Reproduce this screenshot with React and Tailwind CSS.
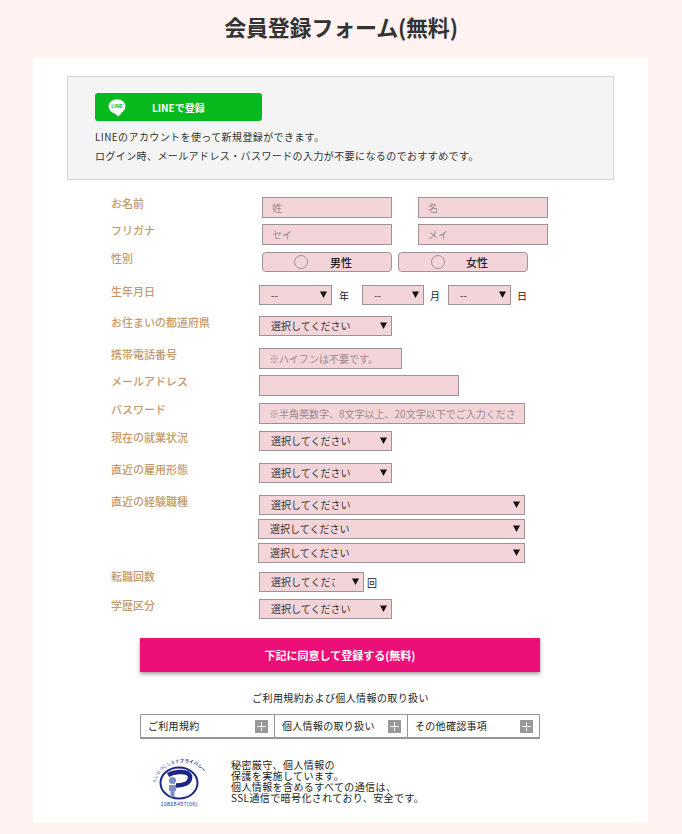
const jp = { fontFamily: '"Noto Sans CJK JP", "Noto Sans", sans-serif' }

function TextInput({ placeholder, className }) {
  return (
    <input
      type="text"
      placeholder={placeholder}
      className={`block h-[21px] border border-[#9b9497] bg-[#f3d5d9] pl-[9px] pr-[9px] text-[10px] text-[#333] outline-none placeholder:text-[#9a8a8e] ${className}`}
    />
  )
}

function Select({ value = '選択してください', className }) {
  return (
    <div className={`relative h-[20px] ${className}`}>
      <select
        defaultValue={value}
        className="block h-full w-full appearance-none rounded-none border border-[#9b9497] bg-[#f3d5d9] pl-[11px] pr-[28px] text-[10px] leading-none text-[#333] outline-none"
      >
        <option>{value}</option>
      </select>
      <svg viewBox="0 0 7 7" className="pointer-events-none absolute right-[5px] top-[6px] h-[7px] w-[7px]">
        <path d="M0 .5h7L3.500 7z" fill="#111" />
      </svg>
    </div>
  )
}

function Radio({ label, className, textClass }) {
  return (
    <div className={`flex h-[20px] w-[130px] items-center rounded-[4px] border border-[#9b9497] bg-[#f3d5d9] text-[11px] font-medium text-[#222] ${className}`}>
      <span className="h-[14px] w-[14px] rounded-full border border-[#9b9497]" />
      <span className={textClass}>{label}</span>
    </div>
  )
}

function Row({ label, height, labelClass = 'mt-[-1px]', children }) {
  return (
    <div className={`grid grid-cols-[148px_1fr] ${height}`}>
      <div className={`text-[11px] font-medium leading-[14px] text-[#c49a6c] ${labelClass}`}>{label}</div>
      <div>{children}</div>
    </div>
  )
}

function Accordion({ label, className }) {
  return (
    <div className={`flex items-center justify-between pl-[7px] pr-[6px] ${className}`}>
      <span className="pb-[1px] text-[10px] tracking-[0.3px] text-[#222]">{label}</span>
      <span className="flex h-[13px] w-[13px] items-center justify-center bg-[#999]">
        <svg viewBox="0 0 9 9" className="h-[9px] w-[9px]">
          <path d="M4.500 0v9M0 4.500h9" stroke="#fff" strokeWidth="1" />
        </svg>
      </span>
    </div>
  )
}

function LineLogo() {
  return (
    <svg viewBox="0 0 18 18" className="mt-[2px] h-[18px] w-[18px]">
      <ellipse cx="9" cy="7.600" rx="8.400" ry="7.400" fill="#fff" />
      <path d="M6.500 14l3.500 3.600c.6-.4 2.600-2 3.600-3.600z" fill="#fff" />
      <text x="9" y="9.400" textAnchor="middle" fontSize="5" fontWeight="700" fill="#06b91c" fontFamily="Liberation Sans">LINE</text>
    </svg>
  )
}

function PrivacyMark() {
  return (
    <svg viewBox="0 0 50 50" className="h-[50px] w-[50px] overflow-visible">
      <defs>
        <path id="arc" d="M1 25C2 13 14 5 26 4.500S44 8 49.500 16" fill="none" />
      </defs>
      <text fill="#2a3a9a" style={jp}>
        <textPath href="#arc">
          <tspan fontSize="4.200">たいせつにします</tspan>
          <tspan fontSize="4.600" fontWeight="700">プライバシー</tspan>
        </textPath>
      </text>
      <ellipse cx="24" cy="25" rx="18.500" ry="15.500" fill="none" stroke="#1d2788" strokeWidth="2" />
      <path d="M13 17c6-3.500 16-4 20-1.500 4 2.800 2 8.500-3 10.500-3 1.200-6 1.500-9 1.500" fill="none" stroke="#1d2788" strokeWidth="4.500" />
      <circle cx="17.500" cy="22.500" r="3.500" fill="#7f8ec4" />
      <path d="M14 27h7v6h-1.500v6h-4v-6h-1.500z" fill="#7f8ec4" />
      <text x="24" y="48" textAnchor="middle" fontSize="5.400" fill="#2a3a9a" fontFamily="Liberation Sans" letterSpacing=".3">10828457(06)</text>
    </svg>
  )
}

export default function App() {
  return (
    <div className="min-h-[834px] bg-[#fff2f0] pt-[12px]" style={jp}>
      <h1 className="h-[45px] text-center text-[22px] font-bold leading-[28px] tracking-[-0.2px] text-[#333]">会員登録フォーム(無料)</h1>
      <div className="ml-[33px] mr-[34px] h-[766px] bg-white pt-[19px]">
        <div className="mx-[34px] h-[104px] border border-[#d5d5d5] bg-[#f4f4f4] pl-[27px] pt-[16px]">
          <div className="flex h-[28px] w-[167px] items-center rounded-[3px] bg-[#06b91c] pl-[13px]">
            <LineLogo />
            <span className="ml-[26px] text-[10px] font-bold text-white">LINEで登録</span>
          </div>
          <p className="mt-[6px] text-[10px] leading-[19px] tracking-[0.4px] text-[#333]">
            LINEのアカウントを使って新規登録ができます。
            <br />
            ログイン時、メールアドレス・パスワードの入力が不要になるのでおすすめです。
          </p>
        </div>

        <div className="pl-[78px] pt-[17px]">
          <Row label="お名前" height="h-[27px]">
            <div className="flex pl-[3px]">
              <TextInput placeholder="姓" className="w-[130px]" />
              <TextInput placeholder="名" className="ml-[26px] w-[130px]" />
            </div>
          </Row>
          <Row label="フリガナ" height="h-[28px]">
            <div className="flex pl-[3px]">
              <TextInput placeholder="セイ" className="w-[130px]" />
              <TextInput placeholder="メイ" className="ml-[26px] w-[130px]" />
            </div>
          </Row>
          <Row label="性別" height="h-[33px]">
            <div className="flex gap-[6px] pl-[3px]">
              <Radio label="男性" className="pl-[31px]" textClass="ml-[22px]" />
              <Radio label="女性" className="pl-[32px]" textClass="ml-[21px]" />
            </div>
          </Row>
          <Row label="生年月日" height="h-[31px]">
            <div className="flex items-center text-[10px] text-[#222]">
              <Select value="--" className="w-[73px]" />
              <span className="ml-[7px] w-[23px]">年</span>
              <Select value="--" className="w-[62px]" />
              <span className="ml-[6px] w-[18px]">月</span>
              <Select value="--" className="w-[63px]" />
              <span className="ml-[6px]">日</span>
            </div>
          </Row>
          <Row label="お住まいの都道府県" height="h-[32px]">
            <Select className="w-[133px]" />
          </Row>
          <Row label="携帯電話番号" height="h-[27px]">
            <TextInput placeholder="※ハイフンは不要です。" className="w-[143px]" />
          </Row>
          <Row label="メールアドレス" height="h-[28px]">
            <TextInput className="w-[200px]" />
          </Row>
          <Row label="パスワード" height="h-[28px]">
            <TextInput placeholder="※半角英数字、8文字以上、20文字以下でご入力ください" className="w-[266px]" />
          </Row>
          <Row label="現在の就業状況" height="h-[32px]">
            <Select className="w-[133px]" />
          </Row>
          <Row label="直近の雇用形態" height="h-[32px]">
            <Select className="w-[133px]" />
          </Row>
          <Row label="直近の経験職種" height="h-[77px]">
            <div className="flex flex-col gap-[4px]">
              <Select className="w-[266px]" />
              <Select className="ml-[-1px] w-[267px]" />
              <Select className="ml-[-1px] w-[267px]" />
            </div>
          </Row>
          <Row label="転職回数" height="h-[27px]" labelClass="mt-[-3px]">
            <div className="flex items-center">
              <Select className="w-[105px]" />
              <span className="ml-[3px] text-[10px] text-[#222]">回</span>
            </div>
          </Row>
          <Row label="学歴区分" height="h-[39px]">
            <Select className="w-[133px]" />
          </Row>
        </div>

        <div className="ml-[107px] mr-[108px] flex h-[34px] items-center justify-center bg-[#ed0f78] text-[11px] font-bold text-white shadow-[0_2px_4px_rgba(0,0,0,0.4)]">
          下記に同意して登録する(無料)
        </div>
        <div className="mt-[19px] text-center text-[10px] leading-[14px] tracking-[0.4px] text-[#222]">ご利用規約および個人情報の取り扱い</div>
        <div className="ml-[107px] mr-[108px] mt-[9px] flex h-[25px] border border-b-2 border-[#9b9497]">
          <Accordion label="ご利用規約" className="w-[134px] border-r border-[#9b9497]" />
          <Accordion label="個人情報の取り扱い" className="w-[133px] border-r border-[#9b9497]" />
          <Accordion label="その他確認事項" className="flex-1" />
        </div>
        <div className="ml-[122px] mt-[19px] flex">
          <PrivacyMark />
          <p className="ml-[26px] mt-[1px] text-[10px] leading-[11px] tracking-[0.4px] text-[#222]">
            秘密厳守、個人情報の
            <br />
            保護を実施しています。
            <br />
            個人情報を含めるすべての通信は、
            <br />
            SSL通信で暗号化されており、安全です。
          </p>
        </div>
      </div>
    </div>
  )
}
